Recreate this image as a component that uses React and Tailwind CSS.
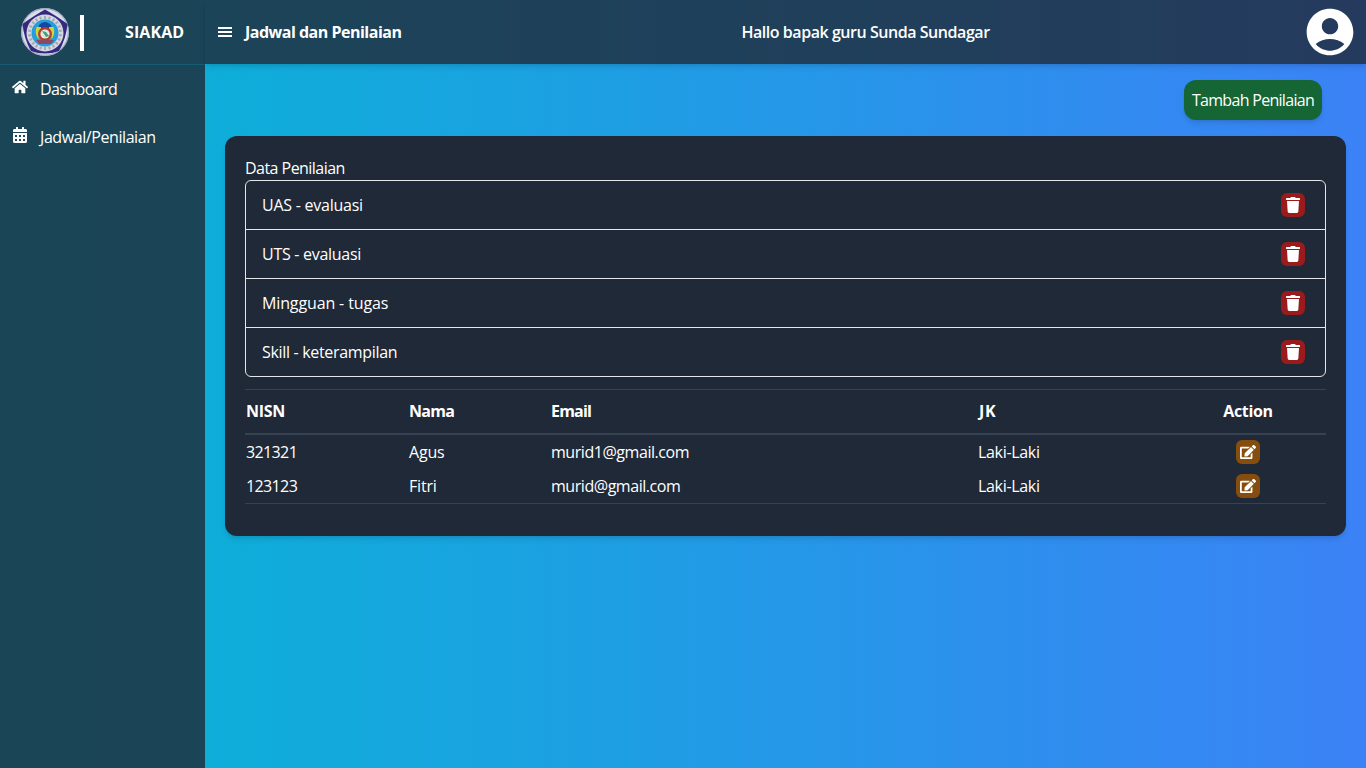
import React from "react";
import { FaHome, FaCalendarAlt, FaTrash, FaEdit } from "react-icons/fa";
import { MdAccountCircle } from "react-icons/md";

const assessments = [
  { label: "UAS - evaluasi", tracking: "tracking-[-0.25px]" },
  { label: "UTS - evaluasi", tracking: "tracking-[-0.28px]" },
  { label: "Mingguan - tugas", tracking: "tracking-[-0.13px]" },
  { label: "Skill - keterampilan", tracking: "tracking-[-0.32px]" },
];

const columns = [
  { label: "NISN", tracking: "tracking-[-0.32px]" },
  { label: "Nama", tracking: "tracking-[-0.75px]" },
  { label: "Email", tracking: "tracking-[-0.8px]" },
  { label: "JK", tracking: "pl-px tracking-[0.8px]" },
];

const students = [
  { nisn: "321321", name: "Agus", email: "murid1@gmail.com", jk: "Laki-Laki" },
  { nisn: "123123", name: "Fitri", email: "murid@gmail.com", jk: "Laki-Laki" },
];

function Logo() {
  const dots = Array.from({ length: 22 }, (_, i) => (i * 360) / 22);
  return (
    <svg className="h-12 w-12 shrink-0" viewBox="0 0 48 48">
      <circle cx="24" cy="24" r="24" fill="#d9deea" />
      <circle cx="24" cy="24" r="23.3" fill="none" stroke="#8d93b5" strokeWidth="0.8" />
      <path d="M24 1.500 Q34 7 46.500 16 Q45 31 38 43 Q24 48 10 43 Q3 31 1.500 16 Q14 7 24 1.500 Z" fill="#35287f" />
      <circle cx="24" cy="25" r="18.500" fill="#d5d7de" />
      {dots.map((a) => (
        <rect key={a} x="23" y="8" width="2" height="3" fill="#a3a8b6" transform={`rotate(${a} 24 25)`} />
      ))}
      <circle cx="24" cy="25" r="13.500" fill="#259cdb" />
      <path d="M18 17 Q24 11 30 17 L31 22 H17 Z" fill="#16479b" />
      <path d="M15.500 19 q-2 6 1 11 l3.500 1 v-12 Z M32.500 19 q2 6 -1 11 l-3.500 1 v-12 Z" fill="#c9d63c" />
      <circle cx="24" cy="26" r="7" fill="#b83a35" />
      <circle cx="24" cy="26" r="4.600" fill="#dcebe5" />
      <path d="M21 23 l4 1 l3 4 l-3 1 Z" fill="#42a274" />
      <path d="M15 32 h18 l-3 4 h-12 Z" fill="#8a4a62" />
    </svg>
  );
}

export default function App() {
  return (
    <div className="flex h-screen w-full overflow-hidden bg-linear-to-r/srgb from-[#06b6d4] to-[#3b82f6] font-['Open_Sans','Noto_Sans',sans-serif] text-base tracking-[-0.32px] text-white">
      <aside className="flex w-[205px] shrink-0 flex-col bg-[#1f2937]/80">
        <div className="flex h-[65px] shrink-0 items-center border-b border-[#155e75] pl-[21px]">
          <Logo />
          <div className="mt-0.5 ml-[11px] h-9 w-[4px] bg-white" />
          <span className="ml-10 pl-px font-bold tracking-[0.1px]">SIAKAD</span>
        </div>
        <nav className="flex flex-col">
          <a className="flex h-12 items-center pl-3">
            <FaHome className="mb-1 h-4 w-4" />
            <span className="ml-3 tracking-[-0.6px]">Dashboard</span>
          </a>
          <a className="flex h-12 items-center pl-3">
            <FaCalendarAlt className="mb-1 h-4 w-4" />
            <span className="ml-3 tracking-[-0.42px]">Jadwal/Penilaian</span>
          </a>
        </nav>
      </aside>
      <div className="flex min-w-0 flex-1 flex-col">
        <header className="flex h-16 shrink-0 items-center justify-between bg-[#1f2937]/80 pr-2 pl-[13px] shadow-md">
          <div className="flex w-[211px] items-center">
            <svg className="h-[14px] w-[14px]" viewBox="0 0 14 14" fill="currentColor">
              <path d="M0 2h14v2H0zM0 6h14v2H0zM0 10h14v2H0z" />
            </svg>
            <span className="ml-[13px] font-bold tracking-[-0.5px] whitespace-nowrap">Jadwal dan Penilaian</span>
          </div>
          <span className="font-semibold tracking-[-0.45px]">Hallo bapak guru Sunda Sundagar</span>
          <MdAccountCircle className="h-14 w-14" />
        </header>
        <main className="flex flex-1 flex-col px-5 pt-4">
          <button className="mr-6 h-10 w-[138px] self-end rounded-xl bg-[#166534] tracking-[-0.7px] whitespace-nowrap shadow-md">Tambah Penilaian</button>
          <section className="mt-4 h-[400px] rounded-xl bg-[#1f2937] p-5 shadow-md">
            <h2 className="h-6 leading-6 tracking-[-0.54px]">Data Penilaian</h2>
            <ul className="divide-y divide-[#e5e7eb] rounded-md border border-[#e5e7eb]">
              {assessments.map((a) => (
                <li key={a.label} className="flex h-[49px] items-center justify-between pr-5 pl-4 last:h-12">
                  <span className={a.tracking}>{a.label}</span>
                  <button className="flex h-6 w-6 items-center justify-center rounded-md bg-[#991b1b]">
                    <FaTrash className="h-4 w-4" />
                  </button>
                </li>
              ))}
            </ul>
            <table className="mt-3 w-full table-fixed border-separate border-spacing-0 text-left">
              <colgroup>
                <col className="w-[163px]" />
                <col className="w-[142px]" />
                <col className="w-[427px]" />
                <col className="w-[193px]" />
                <col />
              </colgroup>
              <thead>
                <tr className="h-[46px]">
                  {columns.map((c) => (
                    <th key={c.label} className="border-t border-b-2 border-[#374151] p-px pb-[3px] font-bold">
                      <span className={c.tracking}>{c.label}</span>
                    </th>
                  ))}
                  <th className="border-t border-b-2 border-[#374151] p-px pb-[3px] text-center font-bold">Action</th>
                </tr>
              </thead>
              <tbody>
                {students.map((s) => (
                  <tr key={s.nisn} className="h-[34px] last:h-[35px] last:*:border-b">
                    <td className="border-[#374151] p-px tracking-[-0.62px]">{s.nisn}</td>
                    <td className="border-[#374151] p-px tracking-[-0.2px]">{s.name}</td>
                    <td className="border-[#374151] p-px tracking-[-0.45px]">{s.email}</td>
                    <td className="border-[#374151] p-px">{s.jk}</td>
                    <td className="border-[#374151] p-px">
                      <button className="mx-auto flex h-6 w-6 items-center justify-center rounded-md bg-[#854d0e]">
                        <FaEdit className="h-4 w-4" />
                      </button>
                    </td>
                  </tr>
                ))}
              </tbody>
            </table>
          </section>
        </main>
      </div>
    </div>
  );
}
